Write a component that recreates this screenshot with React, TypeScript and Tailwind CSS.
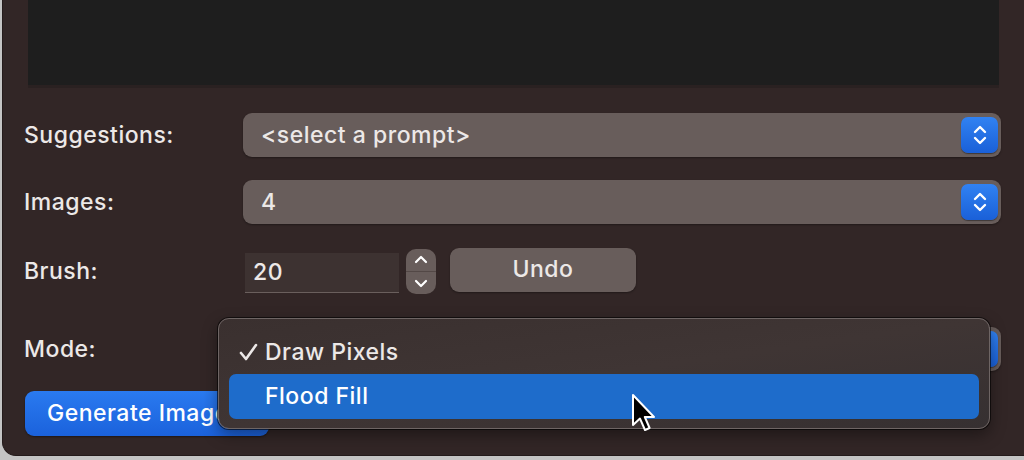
import React from "react";

const font = { fontFamily: "Inter, 'Noto Sans', sans-serif" };
const txt = "text-[23px] font-medium tracking-[0.5px]";

function BlueStepper() {
  return (
    <div className="w-[37px] h-[36px] rounded-[7px] bg-gradient-to-b from-[#3182f2] to-[#1a60d8] flex items-center justify-center shadow-[0_1px_1px_rgba(0,0,0,0.4)]">
      <svg width="16" height="24" viewBox="0 0 16 24" fill="none" stroke="white" strokeWidth="2.4" strokeLinecap="round" strokeLinejoin="round">
        <path d="M3 9 L8 4 L13 9" />
        <path d="M3 15 L8 20 L13 15" />
      </svg>
    </div>
  );
}

function Select({ value }: { value: string }) {
  return (
    <div className="flex-1 h-[44px] rounded-[9px] bg-[#685d5b] flex items-center justify-between pl-[18px] pr-[3px] shadow-[0_1px_2px_rgba(0,0,0,0.35)]">
      <span className={`${txt} text-[#ece8e7]`}>{value}</span>
      <BlueStepper />
    </div>
  );
}

export default function App() {
  return (
    <div className="relative w-[1024px] h-[460px] bg-[#c4c4c4] overflow-hidden" style={font}>
      <div className="ml-[2px] h-[456px] bg-[#322626] rounded-bl-[14px] border-l border-b border-[#241b1b] flex flex-col">
        <div className="ml-[25px] mr-[25px] h-[88px] bg-[#1e1e1e] border-b-[3px] border-[#2a2121]" />
        <div className="flex flex-col pl-[21px] pr-[23px]">
          <div className="mt-[25px] flex items-center">
            <div className={`w-[219px] ${txt} text-[#ece8e7]`}>Suggestions:</div>
            <Select value="<select a prompt>" />
          </div>
          <div className="mt-[23px] flex items-center">
            <div className={`w-[219px] ${txt} text-[#ece8e7]`}>Images:</div>
            <Select value="4" />
          </div>
          <div className="mt-[23px] flex items-center h-[49px]">
            <div className={`w-[221px] ${txt} text-[#ece8e7]`}>Brush:</div>
            <div className={`w-[154px] h-[40px] mt-[3px] bg-[#3d3231] border-b-[1.5px] border-[#6a5f5d] flex items-center pl-[8px] ${txt} text-[#ece8e7]`}>20</div>
            <div className="ml-[7px] w-[30px] h-[45px] rounded-[10px] bg-[#685d5b] flex flex-col items-center justify-center">
              <div className="h-[22px] w-full flex items-center justify-center border-b border-[#534846]">
                <svg width="14" height="10" viewBox="0 0 14 10" fill="none" stroke="white" strokeWidth="2.2" strokeLinecap="round" strokeLinejoin="round"><path d="M2 7 L7 2 L12 7" /></svg>
              </div>
              <div className="h-[22px] w-full flex items-center justify-center">
                <svg width="14" height="10" viewBox="0 0 14 10" fill="none" stroke="white" strokeWidth="2.2" strokeLinecap="round" strokeLinejoin="round"><path d="M2 3 L7 8 L12 3" /></svg>
              </div>
            </div>
            <div className={`ml-[14px] w-[186px] h-[44px] -mt-[4px] rounded-[9px] bg-[#685d5b] flex items-center justify-center ${txt} text-[#ece8e7] shadow-[0_1px_2px_rgba(0,0,0,0.35)]`}>Undo</div>
          </div>
          <div className="mt-[31px] flex items-center">
            <div className={`w-[219px] ${txt} text-[#ece8e7]`}>Mode:</div>
            <Select value="" />
          </div>
          <div className="mt-[20px] flex">
            <div className={`ml-[1px] w-[244px] h-[45px] rounded-[9px] bg-gradient-to-b from-[#2a7af0] to-[#1b62dc] flex items-center pl-[22px] ${txt} text-white shadow-[0_1px_2px_rgba(0,0,0,0.4)]`}>Generate Image</div>
          </div>
        </div>
      </div>

      <div className="absolute left-[218px] top-[318px] w-[772px] h-[111px] rounded-[11px] bg-gradient-to-br from-[#3a302f] via-[#3f3534] to-[#363031] border border-[#6e6564] shadow-[0_0_0_1px_rgba(0,0,0,0.6),0_6px_16px_rgba(0,0,0,0.4)] flex flex-col pt-[16px] px-[10px]">
        <div className={`h-[34px] flex items-center ${txt} text-[#ece8e7]`}>
          <span className="w-[36px] pl-[10px] flex items-center">
            <svg width="19" height="18" viewBox="0 0 19 18" fill="none" stroke="#ece8e7" strokeWidth="2.6" strokeLinecap="round" strokeLinejoin="round"><path d="M2 10 L7 16 L17 2" /></svg>
          </span>
          <span>Draw Pixels</span>
        </div>
        <div className={`mt-[5px] h-[45px] rounded-[7px] bg-[#1e6ccb] flex items-center ${txt} text-white`}>
          <span className="pl-[36px]">Flood Fill</span>
        </div>
      </div>

      <svg className="absolute left-[631px] top-[393px]" width="26" height="40" viewBox="0 0 13 20">
        <path d="M1 1 L1 16 L4.5 12.8 L7 18.5 L9.3 17.5 L6.9 12 L11.5 12 Z" fill="black" stroke="white" strokeWidth="1" strokeLinejoin="round" />
      </svg>
    </div>
  );
}
